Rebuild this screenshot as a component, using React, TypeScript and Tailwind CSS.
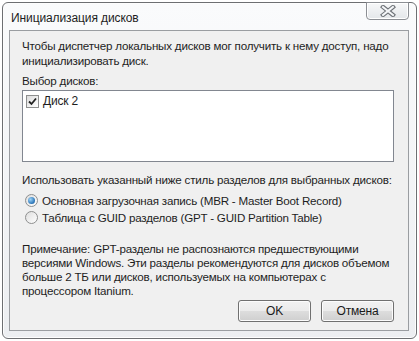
import React from 'react';

const font = { fontFamily: '"Liberation Sans", "Noto Sans", sans-serif' };

const CloseGlyph = () => (
    <svg width="16" height="12" viewBox="0 0 16 12">
        <path d="M3 2 L13 10 M13 2 L3 10" stroke="#6e7277" strokeWidth="4.2" strokeLinecap="square" fill="none" />
        <path d="M3 2 L13 10 M13 2 L3 10" stroke="#f4f6f8" strokeWidth="2" strokeLinecap="square" fill="none" />
    </svg>
);

const CheckBox = () => (
    <span className="w-[13px] h-[13px] border border-[#8e8f8f] bg-gradient-to-br from-[#dcdcdc] to-white flex items-center justify-center shrink-0">
        <svg width="9" height="9" viewBox="0 0 9 9">
            <path d="M1 4.5 L3.5 7 L8 1.5" stroke="#222" strokeWidth="1.8" fill="none" />
        </svg>
    </span>
);

const Radio = ({ checked }: { checked?: boolean }) => (
    <span className="w-[13px] h-[13px] rounded-full border border-[#8e8f8f] bg-gradient-to-br from-[#dedede] to-white flex items-center justify-center shrink-0">
        {checked && (
            <span className="w-[7px] h-[7px] rounded-full bg-[radial-gradient(circle_at_35%_35%,#9ed4f7,#2a73b6_70%,#1c4f86)]" />
        )}
    </span>
);

const WinButton = ({ label }: { label: string }) => (
    <button className="w-[73px] h-[22px] rounded-[3px] border border-[#707070] bg-[linear-gradient(#f2f2f2_0%,#ebebeb_50%,#dddddd_51%,#cfcfcf_100%)] text-[12px] tracking-[-0.2px] text-[#1a1a1a] leading-none shadow-[inset_0_0_0_1px_#fcfcfc]">
        {label}
    </button>
);

export default function App() {
    return (
        <div className="w-[419px] h-[341px] bg-white text-[#1e1e1e] text-[12px]" style={font}>
            <div className="ml-[2px] mt-[2px] w-[415px] h-[337px] rounded-[6px] border border-[#6d6f72] bg-[linear-gradient(#fafbfc,#eceef1)] flex flex-col shadow-[inset_0_0_0_1px_#fdfdfd]">
                {/* Title bar */}
                <div className="h-[27px] flex items-start justify-between">
                    <span className="pl-[8px] pt-[6px] text-[12px] tracking-[-0.1px] text-[#1e1e1e]">Инициализация дисков</span>
                    <div className="mr-[7px] w-[43px] h-[18px] -mt-px rounded-b-[4px] border border-[#8c8f94] bg-[linear-gradient(#f7f8f9,#e4e7ea)] flex items-center justify-center shadow-[inset_0_0_0_1px_#ffffff]">
                        <CloseGlyph />
                    </div>
                </div>

                {/* Client area */}
                <div className="ml-[6px] mr-[7px] h-[301px] border border-[#9a9da1] bg-[#f0f0f0] pl-[12px] pr-[14px] flex flex-col text-[11.6px] leading-[15px] whitespace-nowrap tracking-[-0.2px]">
                    <p className="mt-[7px]">
                        Чтобы диспетчер локальных дисков мог получить к нему доступ, надо<br />
                        инициализировать диск.
                    </p>
                    <p className="mt-[5px]">Выбор дисков:</p>
                    <div className="mt-[2px] h-[72px] border border-[#828790] bg-white pt-[3px] pl-[3px]">
                        <div className="flex items-center gap-[4px]">
                            <CheckBox />
                            <span className="text-[12px]">Диск 2</span>
                        </div>
                    </div>
                    <p className="mt-[10px]">Использовать указанный ниже стиль разделов для выбранных дисков:</p>
                    <div className="mt-[5px] flex flex-col pl-[3px]">
                        <div className="h-[17px] flex items-center gap-[4px]">
                            <Radio checked />
                            <span>Основная загрузочная запись (MBR - Master Boot Record)</span>
                        </div>
                        <div className="h-[17px] flex items-center gap-[4px]">
                            <Radio />
                            <span>Таблица с GUID разделов (GPT - GUID Partition Table)</span>
                        </div>
                    </div>
                    <p className="mt-[16px] leading-[14px]">
                        Примечание: GPT-разделы не распознаются предшествующими<br />
                        версиями Windows. Эти разделы рекомендуются для дисков объемом<br />
                        больше 2 ТБ или дисков, используемых на компьютерах с<br />
                        процессором Itanium.
                    </p>
                    <div className="mt-auto mb-[8px] flex justify-end gap-[10px]">
                        <WinButton label="OK" />
                        <WinButton label="Отмена" />
                    </div>
                </div>
            </div>
        </div>
    );
}
